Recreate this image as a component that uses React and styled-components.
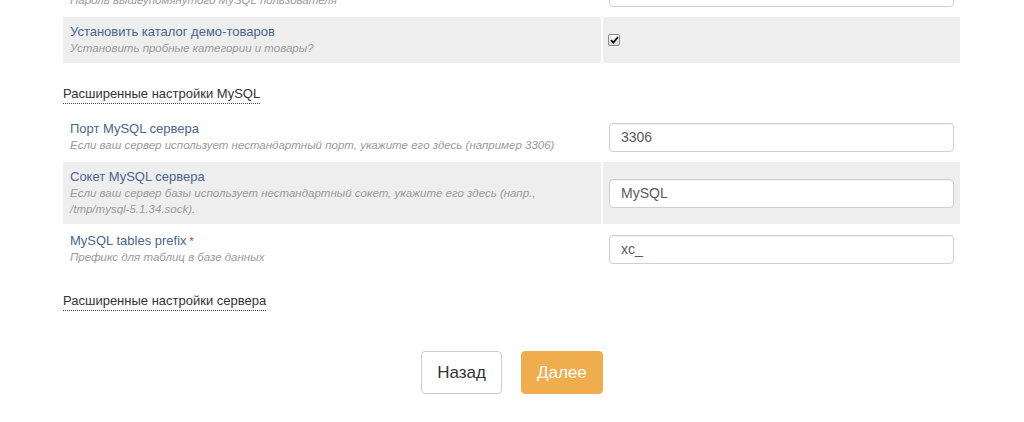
import React from "react";
import styled, { createGlobalStyle } from "styled-components";

const Global = createGlobalStyle`
  html, body { margin: 0; padding: 0; background: #fff; overflow: hidden; }
  body { font-family: "Liberation Sans", Arial, sans-serif; color: #333; }
`;

const Page = styled.div`
  width: 897px;
  margin-left: 63px;
  display: flex;
  flex-direction: column;
  align-items: flex-start;
`;

const Table = styled.div`
  display: flex;
  flex-direction: column;
  gap: 2px;
  width: 100%;
  margin-top: ${(p) => p.$mt || 0}px;
`;

const Row = styled.div`
  display: grid;
  grid-template-columns: 538px 357px;
  column-gap: 2px;
`;

const LabelCell = styled.div`
  background: ${(p) => (p.$shaded ? "#eeeeee" : "#fff")};
  padding: 7px 7px;
  display: flex;
  flex-direction: column;
`;

const FieldCell = styled.div`
  background: ${(p) => (p.$shaded ? "#eeeeee" : "#fff")};
  padding: 0 6px;
  display: flex;
  align-items: center;
`;

const Label = styled.div`
  font-size: 13px;
  line-height: 16px;
  color: #4a668c;
`;

const Req = styled.span`
  color: #d9302c;
  font-size: 11px;
  margin-left: 3px;
  vertical-align: top;
`;

const Desc = styled.div`
  font-size: 11.5px;
  line-height: 16px;
  font-style: italic;
  color: #9a9a9a;
`;

const Input = styled.input`
  box-sizing: border-box;
  width: 100%;
  height: 29px;
  border: 1px solid #cfcfcf;
  border-radius: 4px;
  padding: 0 11px;
  font-family: "Liberation Sans", Arial, sans-serif;
  font-size: 14px;
  color: #5a5a5a;
  background: #fff;
  box-shadow: inset 0 1px 1px rgba(0, 0, 0, 0.06);
  outline: none;
`;

const Check = styled.span`
  box-sizing: border-box;
  display: inline-flex;
  align-items: center;
  justify-content: center;
  width: 12px;
  height: 12px;
  margin-left: -1px;
  border: 1px solid #8e8e8e;
  border-radius: 2px;
  background: linear-gradient(#fcfcfc, #dcdcdc);
`;

const SectionTitle = styled.div`
  display: inline-block;
  font-size: 13px;
  line-height: 16px;
  color: #333;
  padding-bottom: 1px;
  border-bottom: 1px dotted #444;
  margin-top: ${(p) => p.$mt}px;
  margin-bottom: ${(p) => p.$mb}px;
`;

const Buttons = styled.div`
  align-self: center;
  margin-left: 1px;
  display: flex;
  gap: 19px;
  margin-top: 40px;
`;

const Button = styled.button`
  box-sizing: border-box;
  height: 43px;
  padding: 0 15px;
  border-radius: 4px;
  font-family: "Liberation Sans", Arial, sans-serif;
  font-size: 17px;
  border: 1px solid ${(p) => (p.$primary ? "#f0ad4e" : "#cccccc")};
  background: ${(p) => (p.$primary ? "#f0ad4e" : "#fff")};
  color: ${(p) => (p.$primary ? "#fff" : "#333")};
  min-width: ${(p) => (p.$primary ? 81 : 80)}px;
`;

const FieldRow = ({ label, desc, required, shaded, children }) => (
  <Row>
    <LabelCell $shaded={shaded}>
      <Label>
        {label}
        {required && <Req>*</Req>}
      </Label>
      {desc.map((d, i) => (
        <Desc key={i}>{d}</Desc>
      ))}
    </LabelCell>
    <FieldCell $shaded={shaded}>{children}</FieldCell>
  </Row>
);

export default function App() {
  return (
    <>
      <Global />
      <Page>
        <Table $mt={-31}>
          <FieldRow
            label="Пароль MySQL пользователя"
            desc={["Пароль вышеупомянутого MySQL пользователя"]}
          >
            <Input type="password" defaultValue="" />
          </FieldRow>
          <FieldRow
            shaded
            label="Установить каталог демо-товаров"
            desc={["Установить пробные категории и товары?"]}
          >
            <Check>
              <svg width="9" height="8" viewBox="0 0 9 8">
                <path d="M1 4.2 L3.3 6.6 L8 1.2" fill="none" stroke="#111" strokeWidth="1.8" />
              </svg>
            </Check>
          </FieldRow>
        </Table>

        <SectionTitle $mt={23} $mb={10}>Расширенные настройки MySQL</SectionTitle>

        <Table>
          <FieldRow
            label="Порт MySQL сервера"
            desc={["Если ваш сервер использует нестандартный порт, укажите его здесь (например 3306)"]}
          >
            <Input defaultValue="3306" />
          </FieldRow>
          <FieldRow
            shaded
            label="Сокет MySQL сервера"
            desc={[
              "Если ваш сервер базы использует нестандартный сокет, укажите его здесь (напр.,",
              "/tmp/mysql-5.1.34.sock).",
            ]}
          >
            <Input defaultValue="MySQL" />
          </FieldRow>
          <FieldRow label="MySQL tables prefix" required desc={["Префикс для таблиц в базе данных"]}>
            <Input defaultValue="xc_" />
          </FieldRow>
        </Table>

        <SectionTitle $mt={21} $mb={0}>Расширенные настройки сервера</SectionTitle>

        <Buttons>
          <Button>Назад</Button>
          <Button $primary>Далее</Button>
        </Buttons>
      </Page>
    </>
  );
}
